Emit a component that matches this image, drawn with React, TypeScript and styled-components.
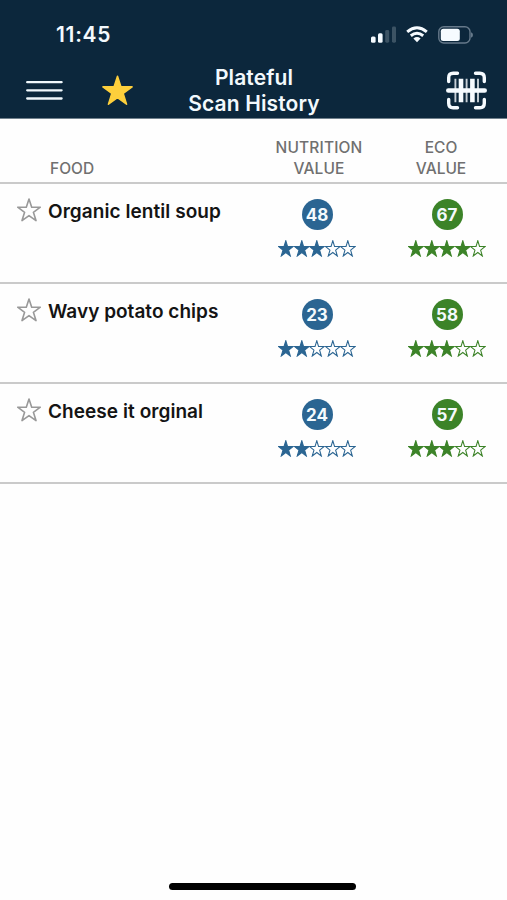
import React from "react";
import styled, { createGlobalStyle } from "styled-components";

const GlobalStyle = createGlobalStyle`
  * { box-sizing: border-box; }
  body { margin: 0; background: #fefefe; font-family: Inter, "Liberation Sans", sans-serif; }
  svg { display: block; flex: none; }
`;

const Screen = styled.main`
  width: 507px;
  height: 900px;
  display: flex;
  flex-direction: column;
  overflow: hidden;
  background: #fefefe;
`;

const Header = styled.header`
  height: 119px;
  background: #0c273c;
  color: #f3f9fd;
  border-bottom: 1px solid #71818d;
`;

const StatusBar = styled.div`
  height: 64px;
  padding: 5px 34px 0 56px;
  display: flex;
  align-items: center;
  justify-content: space-between;
`;

const Clock = styled.span`
  font-size: 21px;
  font-weight: 600;
  line-height: 26px;
  letter-spacing: 0.7px;
`;

const StatusIcons = styled.div`
  display: flex;
  align-items: center;
  gap: 10px;
`;

const NavBar = styled.nav`
  height: 54px;
  display: grid;
  grid-template-columns: 76px 90px 176px 1fr;
  align-items: center;
`;

const IconButton = styled.button<{ $left: number }>`
  border: 0;
  background: none;
  color: inherit;
  padding: 0 0 2px ${(p) => p.$left}px;
`;

const Title = styled.h1`
  margin: 0;
  font-size: 21px;
  line-height: 26.5px;
  font-weight: 600;
  text-align: center;
  white-space: nowrap;
`;

const TitleLine = styled.span<{ $spacing: number }>`
  display: block;
  letter-spacing: ${(p) => p.$spacing}px;
`;

const TableHead = styled.div`
  height: 65px;
  display: grid;
  grid-template-columns: 254px 130px 114px;
  align-items: end;
  padding-bottom: 3px;
  border-bottom: 2px solid #cacaca;
  color: #707070;
  font-size: 15.5px;
  line-height: 21px;
  font-weight: 550;
  text-align: center;
`;

const HeadCell = styled.div<{ $left?: boolean; $spacing: number }>`
  letter-spacing: ${(p) => p.$spacing}px;
  ${(p) => (p.$left ? "text-align: left; padding-left: 50px;" : "")}
`;

const Row = styled.section`
  height: 100px;
  display: grid;
  grid-template-columns: 252px 130px 130px;
  border-bottom: 2px solid #cacaca;
  overflow: hidden;
`;

const Food = styled.div`
  display: flex;
  align-items: flex-start;
  padding: 14px 0 0 17px;
`;

const FoodName = styled.span<{ $spacing: number }>`
  margin: 1px 0 0 7px;
  font-size: 19px;
  font-weight: 600;
  line-height: 25px;
  color: #141414;
  white-space: nowrap;
  letter-spacing: ${(p) => p.$spacing}px;
`;

const Score = styled.div<{ $color: string }>`
  display: flex;
  flex-direction: column;
  align-items: center;
  padding-top: 15px;
  color: ${(p) => p.$color};
`;

const Badge = styled.div`
  width: 31px;
  height: 31px;
  border-radius: 50%;
  background: currentColor;
  display: flex;
  align-items: center;
  justify-content: center;
`;

const BadgeValue = styled.span`
  color: #f4fafd;
  font-size: 17px;
  font-weight: 650;
  line-height: 20px;
`;

const Stars = styled.div`
  display: flex;
  margin-top: 10px;
`;

const HomeArea = styled.footer`
  margin-top: auto;
  padding-bottom: 10px;
  display: flex;
  justify-content: center;
  padding-left: 18px;
`;

const HomeBar = styled.div`
  width: 187px;
  height: 7px;
  border-radius: 4px;
  background: #000;
`;

const STAR = "M12 1 14.7 9.2 23.3 9.2 16.4 14.3 19 22.6 12 17.6 5 22.6 7.6 14.3 .7 9.2 9.3 9.2Z";

const RatingStar = ({ filled }: { filled: boolean }) => (
  <svg width="15.6" height="17" viewBox="0 0 24 24" preserveAspectRatio="none">
    <path d={STAR} fill={filled ? "currentColor" : "none"} stroke="currentColor" strokeWidth="1.6" />
  </svg>
);

const Rating = ({ value, stars, color }: { value: number; stars: number; color: string }) => (
  <Score $color={color}>
    <Badge><BadgeValue>{value}</BadgeValue></Badge>
    <Stars>
      {[0, 1, 2, 3, 4].map((i) => <RatingStar key={i} filled={i < stars} />)}
    </Stars>
  </Score>
);

const foods = [
  { name: "Organic lentil soup", spacing: 0.06, nutrition: 48, nStars: 3, eco: 67, eStars: 4 },
  { name: "Wavy potato chips", spacing: 0.02, nutrition: 23, nStars: 2, eco: 58, eStars: 3 },
  { name: "Cheese it orginal", spacing: 0.06, nutrition: 24, nStars: 2, eco: 57, eStars: 3 },
];

const SignalIcon = () => (
  <svg width="26" height="17" viewBox="0 0 26 17" fill="#f6fbff">
    <rect x="1" y="10.5" width="4.6" height="6.2" rx="1.5" />
    <rect x="8" y="7.3" width="4.6" height="9.4" rx="1.5" />
    <rect x="15.2" y="4" width="4" height="12.7" rx="1.4" fill="#3c5364" />
    <rect x="22" y=".6" width="4" height="16.1" rx="1.4" fill="#3c5364" />
  </svg>
);

const WifiIcon = () => (
  <svg width="22" height="17" viewBox="0 0 22 17" fill="none" stroke="#f6fbff" strokeWidth="3">
    <path d="M1.2 5.8Q11-2.2 20.8 5.8M4.8 9.7Q11 4.8 17.2 9.7" />
    <path d="M7.4 12.5Q11 9.7 14.6 12.5L11 16.3Z" fill="#f6fbff" stroke="none" />
  </svg>
);

const BatteryIcon = () => (
  <svg width="35" height="18" viewBox="0 0 35 18">
    <rect x=".8" y=".8" width="31.2" height="16.2" rx="5" fill="none" stroke="#66798a" strokeWidth="1.4" />
    <rect x="2.8" y="2.8" width="19" height="12.3" rx="2.5" fill="#f6fbff" />
    <path d="M33 6.2Q35 7 35 9T33 11.8Z" fill="#66798a" />
  </svg>
);

const MenuIcon = () => (
  <svg width="37" height="21" viewBox="0 0 37 21" stroke="#f0f8fc" strokeWidth="2.3" strokeLinecap="round">
    <path d="M1.2 2.2H35.6M1.2 10.3H35.6M1.2 18.5H35.6" />
  </svg>
);

const FavoriteIcon = () => (
  <svg width="31" height="31" viewBox="0 0 24 24">
    <path d={STAR} fill="#fdcf3c" stroke="#fdcf3c" strokeWidth="1.2" strokeLinejoin="round" />
  </svg>
);

const ScanIcon = () => (
  <svg width="41" height="39" viewBox="0 0 41 39" fill="none" stroke="#f6fbff">
    <path
      d="M2.7 10.5V6.7Q2.7 2.2 7.2 2.2H11.5M29.5 2.2H33.8Q38.3 2.2 38.3 6.7V10.5M38.3 28.5V32.3Q38.3 36.8 33.8 36.8H29.5M11.5 36.8H7.2Q2.7 36.8 2.7 32.3V28.5"
      strokeWidth="3.4" strokeLinecap="round"
    />
    <path d="M2.3 19.5H38.7" strokeWidth="4.6" strokeLinecap="round" />
    <path d="M15 7.8V31.2M26.4 7.8V31.2" strokeWidth="4.6" />
    <path d="M9.4 7.8V31.2M20.6 7.8V31.2M32 7.8V31.2" strokeWidth="1.9" opacity=".8" />
  </svg>
);

const SaveIcon = () => (
  <svg width="24" height="24" viewBox="0 0 24 24">
    <path d={STAR} fill="none" stroke="#999" strokeWidth="1.6" strokeLinejoin="round" />
  </svg>
);

export default function App() {
  return (
    <>
      <GlobalStyle />
      <Screen>
        <Header>
          <StatusBar>
            <Clock>11:45</Clock>
            <StatusIcons><SignalIcon /><WifiIcon /><BatteryIcon /></StatusIcons>
          </StatusBar>
          <NavBar>
            <IconButton $left={26} aria-label="Menu"><MenuIcon /></IconButton>
            <IconButton $left={26} aria-label="Favorites"><FavoriteIcon /></IconButton>
            <Title>
              <TitleLine $spacing={0.1}>Plateful</TitleLine>
              <TitleLine $spacing={0.12}>Scan History</TitleLine>
            </Title>
            <IconButton $left={103.5} aria-label="Scan"><ScanIcon /></IconButton>
          </NavBar>
        </Header>
        <TableHead>
          <HeadCell $left $spacing={0}>FOOD</HeadCell>
          <HeadCell $spacing={0.15}>NUTRITION<br />VALUE</HeadCell>
          <HeadCell $spacing={0}>ECO<br />VALUE</HeadCell>
        </TableHead>
        {foods.map((f) => (
          <Row key={f.name}>
            <Food>
              <SaveIcon />
              <FoodName $spacing={f.spacing}>{f.name}</FoodName>
            </Food>
            <Rating value={f.nutrition} stars={f.nStars} color="#2b6592" />
            <Rating value={f.eco} stars={f.eStars} color="#3c8328" />
          </Row>
        ))}
        <HomeArea><HomeBar /></HomeArea>
      </Screen>
    </>
  );
}
